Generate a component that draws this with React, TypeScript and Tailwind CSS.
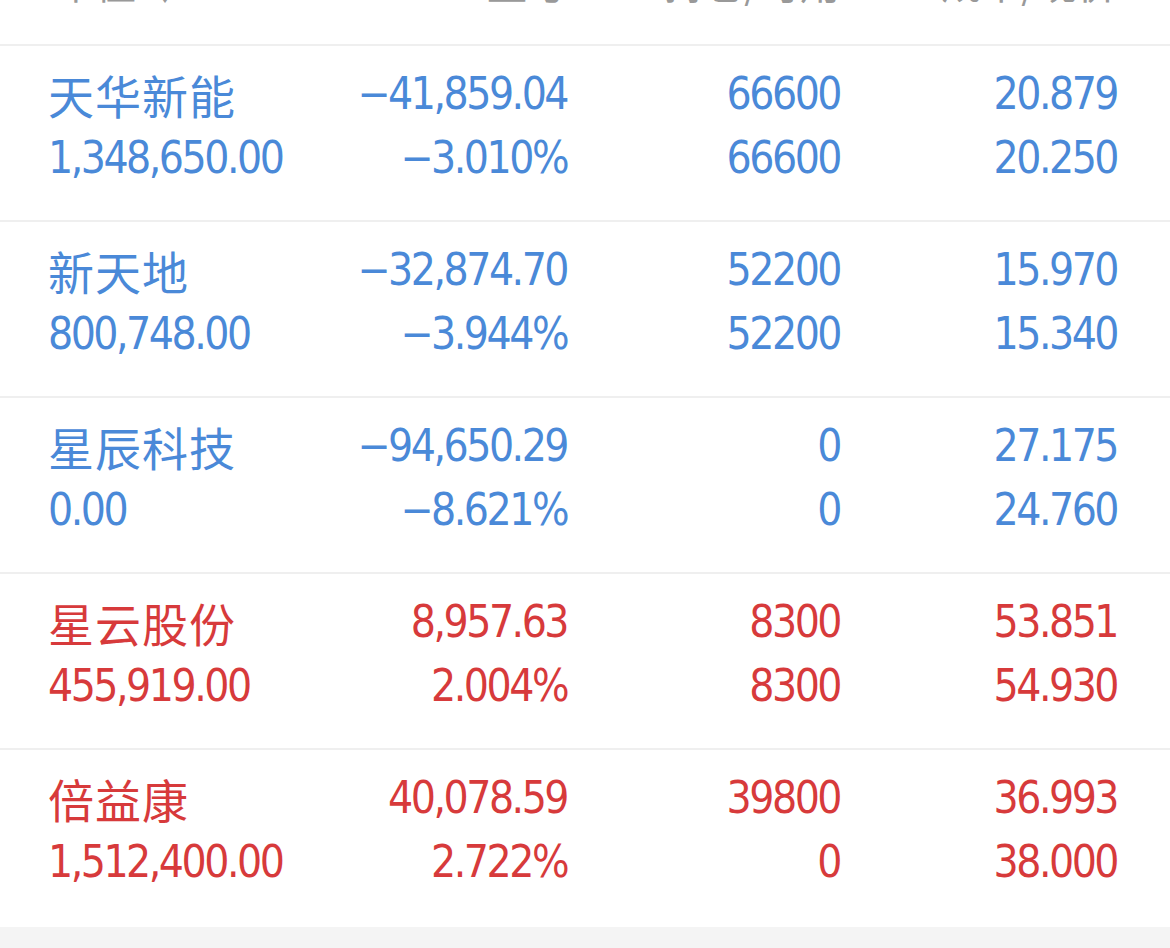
import React from 'react';

interface Holding {
	name: string;
	value: string;
	pnl: string;
	pnlPct: string;
	qty: string;
	avail: string;
	cost: string;
	price: string;
	up: boolean;
}

const holdings: Holding[] = [
	{ name: '天华新能', value: '1,348,650.00', pnl: '−41,859.04', pnlPct: '−3.010%', qty: '66600', avail: '66600', cost: '20.879', price: '20.250', up: false },
	{ name: '新天地', value: '800,748.00', pnl: '−32,874.70', pnlPct: '−3.944%', qty: '52200', avail: '52200', cost: '15.970', price: '15.340', up: false },
	{ name: '星辰科技', value: '0.00', pnl: '−94,650.29', pnlPct: '−8.621%', qty: '0', avail: '0', cost: '27.175', price: '24.760', up: false },
	{ name: '星云股份', value: '455,919.00', pnl: '8,957.63', pnlPct: '2.004%', qty: '8300', avail: '8300', cost: '53.851', price: '54.930', up: true },
	{ name: '倍益康', value: '1,512,400.00', pnl: '40,078.59', pnlPct: '2.722%', qty: '39800', avail: '0', cost: '36.993', price: '38.000', up: true },
];

// condensed digits, tightened to match the DIN-style numerals
const numFont = "font-['DejaVu_Sans_Condensed','Noto_Sans_CJK_SC',sans-serif] text-[44px] leading-[64px] tracking-[-2.5px]";

const Row = ({ h }: { h: Holding }) => {
	const color = h.up ? 'text-[#d73a3b]' : 'text-[#4a89d8]';
	return (
		<div className={`flex h-[176px] border-t-[2px] border-[#efefef] pl-[48px] pt-[16px] ${color}`}>
			<div className="flex w-[270px] flex-col">
				<span className="font-['Noto_Sans_CJK_SC',sans-serif] text-[46px] leading-[64px] tracking-[1px]">{h.name}</span>
				<span className={numFont}>{h.value}</span>
			</div>
			<div className={`flex w-[249px] flex-col items-end ${numFont}`}>
				<span>{h.pnl}</span>
				<span>{h.pnlPct}</span>
			</div>
			<div className={`flex w-[273px] flex-col items-end ${numFont}`}>
				<span>{h.qty}</span>
				<span>{h.avail}</span>
			</div>
			<div className={`flex w-[277px] flex-col items-end ${numFont}`}>
				<span>{h.cost}</span>
				<span>{h.price}</span>
			</div>
		</div>
	);
};

const App = () => {
	return (
		<div className="min-h-[948px] w-[1170px] bg-[#f4f4f4]">
			<div className="bg-white">
				{/* header, mostly scrolled off */}
				<div className="h-[44px] overflow-hidden">
					<div className="mt-[-40px] flex pl-[56px] font-['Noto_Sans_CJK_SC',sans-serif] text-[40px] leading-[44px] text-[#999999]">
						<span className="w-[262px]">市值 ↓</span>
						<span className="w-[249px] text-right">盈亏</span>
						<span className="w-[273px] text-right">持仓/可用</span>
						<span className="w-[277px] text-right">成本/现价</span>
					</div>
				</div>
				{holdings.map((h) => (
					<Row key={h.name} h={h} />
				))}
				<div className="h-[3px]" />
			</div>
		</div>
	);
};

export default App;
